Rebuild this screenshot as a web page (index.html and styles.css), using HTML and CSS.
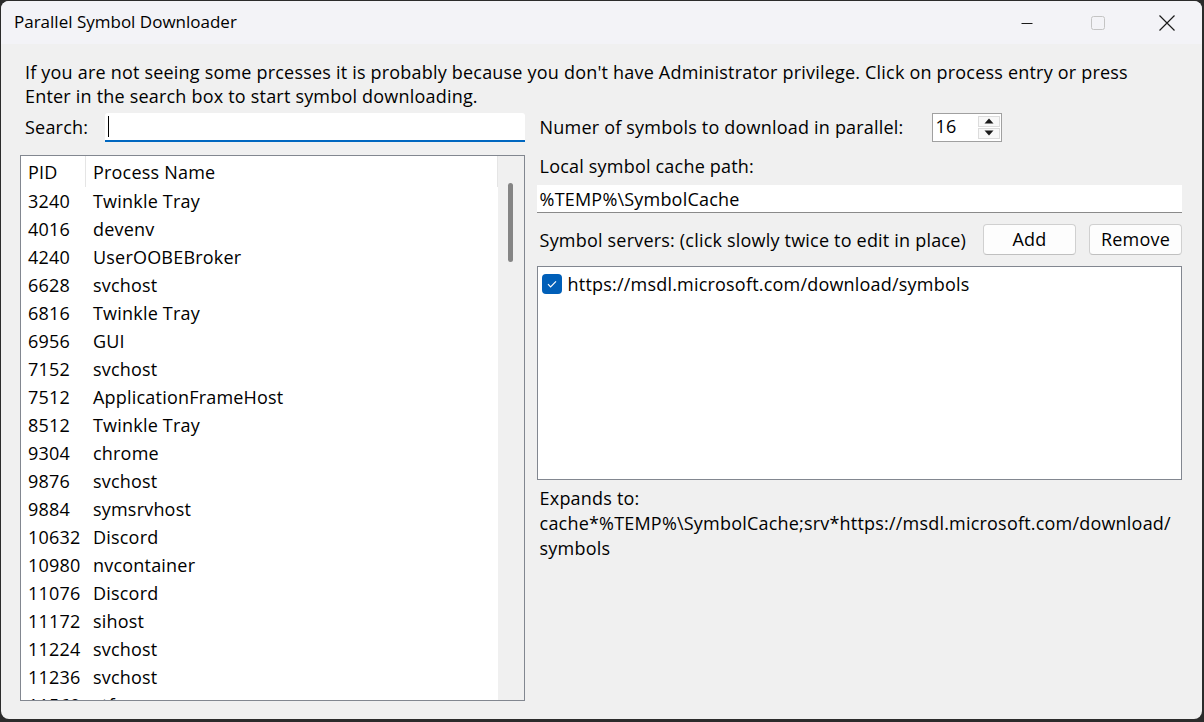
FILE: index.html
```html
<!DOCTYPE html>
<html>
<head>
<meta charset="utf-8">
<link rel="stylesheet" href="styles.css">
</head>
<body>
<div class="window">
  <div class="titlebar">
    <div class="title">Parallel Symbol Downloader</div>
    <div class="caption-btns">
      <div class="cbtn"><svg width="16" height="16" viewBox="0 0 16 16"><path d="M2.5 8.5h11" stroke="#1a1a1a" stroke-width="1"/></svg></div>
      <div class="cbtn"><svg width="16" height="16" viewBox="0 0 16 16"><rect x="2.5" y="1.5" width="13" height="13" rx="2" fill="none" stroke="#c4c4c4" stroke-width="1"/></svg></div>
      <div class="cbtn"><svg width="18" height="18" viewBox="0 0 18 18"><path d="M1.5 1.5l15 15M16.5 1.5l-15 15" stroke="#1a1a1a" stroke-width="1.2"/></svg></div>
    </div>
  </div>
  <div class="content">
    <p class="desc">If you are not seeing some prcesses it is probably because you don't have Administrator privilege. Click on process entry or press<br>Enter in the search box to start symbol downloading.</p>
    <div class="columns">
      <div class="left">
        <div class="search-row">
          <span class="label">Search:</span>
          <div class="search-input"><span class="caret"></span></div>
        </div>
        <div class="listview">
          <div class="lv-main">
            <div class="lv-header">
              <div class="col-pid hcell">PID</div>
              <div class="col-name hcell">Process Name</div>
            </div>
            <div class="lv-body">
              <div class="row"><span class="col-pid">3240</span><span class="col-name">Twinkle Tray</span></div>
              <div class="row"><span class="col-pid">4016</span><span class="col-name">devenv</span></div>
              <div class="row"><span class="col-pid">4240</span><span class="col-name">UserOOBEBroker</span></div>
              <div class="row"><span class="col-pid">6628</span><span class="col-name">svchost</span></div>
              <div class="row"><span class="col-pid">6816</span><span class="col-name">Twinkle Tray</span></div>
              <div class="row"><span class="col-pid">6956</span><span class="col-name">GUI</span></div>
              <div class="row"><span class="col-pid">7152</span><span class="col-name">svchost</span></div>
              <div class="row"><span class="col-pid">7512</span><span class="col-name">ApplicationFrameHost</span></div>
              <div class="row"><span class="col-pid">8512</span><span class="col-name">Twinkle Tray</span></div>
              <div class="row"><span class="col-pid">9304</span><span class="col-name">chrome</span></div>
              <div class="row"><span class="col-pid">9876</span><span class="col-name">svchost</span></div>
              <div class="row"><span class="col-pid">9884</span><span class="col-name">symsrvhost</span></div>
              <div class="row"><span class="col-pid">10632</span><span class="col-name">Discord</span></div>
              <div class="row"><span class="col-pid">10980</span><span class="col-name">nvcontainer</span></div>
              <div class="row"><span class="col-pid">11076</span><span class="col-name">Discord</span></div>
              <div class="row"><span class="col-pid">11172</span><span class="col-name">sihost</span></div>
              <div class="row"><span class="col-pid">11224</span><span class="col-name">svchost</span></div>
              <div class="row"><span class="col-pid">11236</span><span class="col-name">svchost</span></div>
              <div class="row"><span class="col-pid">11560</span><span class="col-name">ctfmon</span></div>
            </div>
          </div>
          <div class="scrollbar"><div class="thumb"></div></div>
        </div>
      </div>
      <div class="right">
        <div class="parallel-row">
          <span class="label">Numer of symbols to download in parallel:</span>
          <div class="spinner">
            <span class="spin-val">16</span>
            <div class="spin-btns">
              <div class="spin-btn"><svg width="10" height="6" viewBox="0 0 10 6"><path d="M5 0.5L9.5 5.5H0.5Z" fill="#1a1a1a"/></svg></div>
              <div class="spin-btn"><svg width="10" height="6" viewBox="0 0 10 6"><path d="M0.5 0.5H9.5L5 5.5Z" fill="#1a1a1a"/></svg></div>
            </div>
          </div>
        </div>
        <div class="label block-label">Local symbol cache path:</div>
        <div class="path-input">%TEMP%\SymbolCache</div>
        <div class="servers-row">
          <span class="label">Symbol servers: (click slowly twice to edit in place)</span>
          <div class="btns">
            <div class="btn">Add</div>
            <div class="btn">Remove</div>
          </div>
        </div>
        <div class="servers-list">
          <div class="server">
            <span class="checkbox"><svg width="12" height="10" viewBox="0 0 12 10"><path d="M2 5.2l2.6 2.6L10 2.4" fill="none" stroke="#fff" stroke-width="1.2"/></svg></span>
            <span>https://msdl.microsoft.com/download/symbols</span>
          </div>
        </div>
        <div class="expands">Expands to:<br>cache*%TEMP%\SymbolCache;srv*https://msdl.microsoft.com/download/<br>symbols</div>
      </div>
    </div>
  </div>
</div>
</body>
</html>
```

FILE: styles.css
```css
* { box-sizing: border-box; }
html, body { margin: 0; padding: 0; }
body {
  background: #2b2b2b;
  width: 1204px;
  height: 722px;
  overflow: hidden;
  font-family: "Open Sans", "Noto Sans", sans-serif;
  color: #000;
}
.window {
  margin: 1px 2px 3px 1px;
  height: 718px;
  background: #f0f0f0;
  border-radius: 8px;
  overflow: hidden;
}
.titlebar {
  height: 43px;
  background: #f3f3f7;
  display: flex;
  align-items: center;
  justify-content: space-between;
}
.title {
  font-size: 17px;
  padding-left: 13px;
  padding-bottom: 2px;
}
.caption-btns { display: flex; height: 100%; }
.cbtn {
  width: 70px;
  height: 100%;
  display: flex;
  align-items: center;
  justify-content: center;
}
.content {
  padding: 16px 20px 0 19px;
  font-size: 18px;
  letter-spacing: 0.2px;
}
.desc {
  margin: 0;
  padding-left: 5px;
  line-height: 24px;
  white-space: nowrap;
}
.columns {
  display: flex;
  gap: 12px;
  margin-top: 4px;
}
.left { width: 505px; display: flex; flex-direction: column; }
.right { width: 646px; display: flex; flex-direction: column; }
.search-row {
  display: flex;
  align-items: center;
  height: 30px;
  padding-left: 5px;
}
.search-row .label { width: 80px; }
.search-input {
  flex: 1;
  height: 29px;
  background: #fff;
  border-bottom: 2px solid #0067c0;
  border-radius: 3px 3px 0 0;
  display: flex;
  align-items: center;
  padding-left: 3px;
}
.caret { width: 1px; height: 21px; background: #000; }
.listview {
  margin-top: 13px;
  height: 546px;
  border: 1px solid #828790;
  background: #fff;
  display: flex;
  overflow: hidden;
}
.lv-main { flex: 1; }
.lv-header {
  display: flex;
  height: 31px;
  align-items: center;
  border-right: 1px solid #e5e5e5;
}
.hcell { height: 100%; display: flex; align-items: center; }
.lv-header .col-pid { border-right: 1px solid #e5e5e5; }
.col-pid { width: 65px; padding-left: 7px; flex: none; }
.col-name { padding-left: 7px; }
.row { display: flex; height: 28px; align-items: center; }
.row .col-pid { width: 72px; }
.row .col-name { padding-left: 0; }
.scrollbar {
  width: 26px;
  background: #f0f0f0;
  position: relative;
}
.thumb {
  position: absolute;
  left: 10px;
  top: 27px;
  width: 5px;
  height: 79px;
  border-radius: 3px;
  background: #858585;
}
.parallel-row {
  display: flex;
  align-items: center;
  height: 30px;
  padding-left: 3px;
}
.parallel-row .label { width: 392px; }
.spinner {
  width: 70px;
  height: 29px;
  border: 1px solid #a0a0a0;
  background: #fff;
  display: flex;
  align-items: center;
  justify-content: space-between;
  padding-left: 3px;
}
.spin-val { padding-bottom: 2px; }
.spin-btns {
  display: flex;
  flex-direction: column;
  height: 100%;
  padding: 2px 1px 2px 0;
  width: 23px;
  gap: 1px;
}
.spin-btn {
  flex: 1;
  display: flex;
  align-items: center;
  justify-content: center;
  background: #f8f8f8;
  border: 1px solid #dcdcdc;
}
.block-label {
  margin-top: 12px;
  padding-left: 3px;
  line-height: 24px;
}
.path-input {
  margin-top: 7px;
  height: 28px;
  background: #fff;
  border-bottom: 1px solid #8a8a8a;
  padding-left: 3px;
  display: flex;
  align-items: center;
}
.servers-row {
  display: flex;
  align-items: center;
  justify-content: space-between;
  margin-top: 11px;
  height: 31px;
  padding-left: 3px;
}
.btns { display: flex; gap: 13px; }
.btn {
  width: 93px;
  height: 31px;
  background: #fdfdfd;
  border: 1px solid #d0d0d0;
  border-bottom-color: #c0c0c0;
  border-radius: 4px;
  display: flex;
  align-items: center;
  justify-content: center;
  padding-bottom: 1px;
}
.servers-list {
  margin-top: 11px;
  height: 214px;
  background: #fff;
  border: 1px solid #828790;
  padding: 5px 0 0 4px;
}
.server { display: flex; align-items: center; gap: 6px; height: 24px; }
.checkbox {
  width: 20px;
  height: 20px;
  background: #005fb8;
  border-radius: 4px;
  display: flex;
  align-items: center;
  justify-content: center;
}
.expands {
  margin-top: 6px;
  padding-left: 3px;
  line-height: 25px;
}
```
